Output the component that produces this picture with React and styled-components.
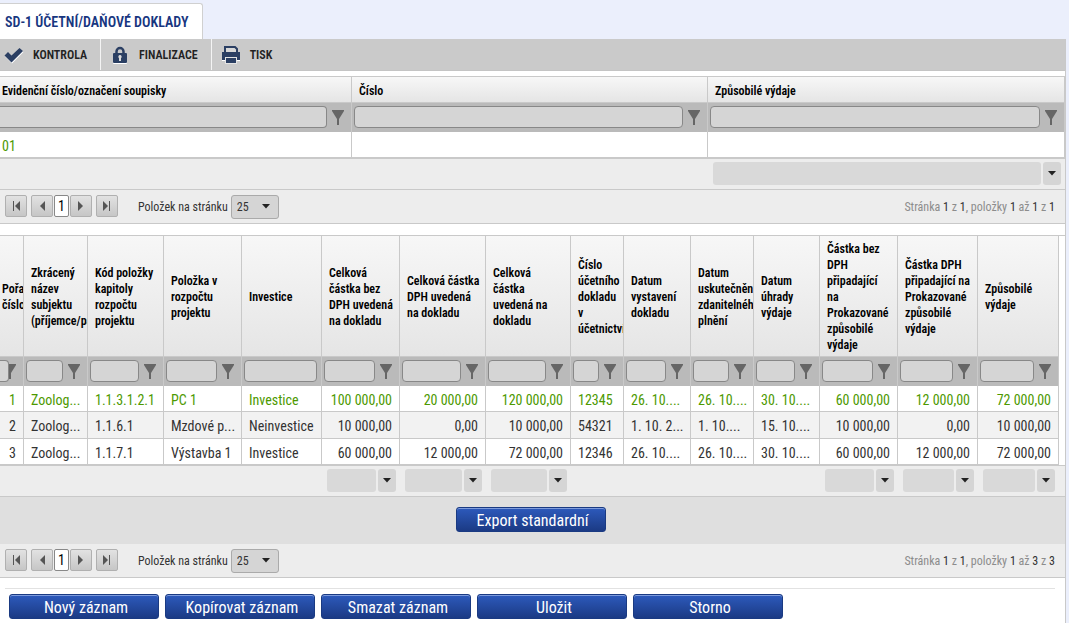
import styled, { createGlobalStyle } from "styled-components";

const GlobalStyle = createGlobalStyle`
  * {
    box-sizing: border-box;
  }

  body {
    margin: 0;
    background-color: #ebeffc;
    color: #333;
    font-family: "Roboto Condensed", "Liberation Sans Narrow", Roboto, sans-serif;
    font-size: 14px;
  }

  button, input, select {
    font-family: inherit;
  }
`;

const Page = styled.div`
  padding: 3px 3px 0 0;
`;

const Tab = styled.h1`
  display: inline-flex;
  align-items: center;
  height: 36px;
  margin: 0;
  padding: 0 14px 0 5px;
  border: 1px solid #d0d0d0;
  border-width: 1px 1px 0 0;
  border-top-right-radius: 3px;
  background-color: white;
  color: #17367f;
  font-size: 14px;
  font-weight: 600;
  vertical-align: top;
`;

const Panel = styled.main`
  min-height: calc(100vh - 39px);
  border-right: 1px solid #c9c9c9;
  background-color: white;
`;

const Toolbar = styled.div`
  display: flex;
  height: 32px;
  border-bottom: 1px solid #c4c4c4;
  background-color: #cacaca;
`;

const ToolButton = styled.button`
  display: flex;
  align-items: center;
  gap: 9px;
  padding: 0 13px 0 4px;
  border: 0;
  border-right: 1px solid #f4f4f4;
  background: none;
  color: #222;
  font-size: 12px;
  font-weight: 600;

  & + & {
    padding-left: 9px;
  }

  &:last-child {
    border-right: 0;
  }
`;

const Grid = styled.section`
  margin-top: ${({ $gap }) => $gap}px;
  border-top: 1px solid #c9c9c9;
`;

const Scroller = styled.div`
  padding-right: ${({ $inset }) => $inset}px;
`;

const Footer = styled(Scroller)`
  border: 1px solid #c9c9c9;
  border-width: 1px 0;
  background-color: #ededed;
`;

const Table = styled.table`
  width: 100%;
  table-layout: fixed;
  border-collapse: separate;
  border-spacing: 0;
`;

const HeadCell = styled.th`
  height: ${({ $height }) => $height}px;
  padding: 2px 0 0 ${({ $first }) => ($first ? 2 : 7)}px;
  overflow: hidden;
  border: 1px solid #c9c9c9;
  border-width: 0 1px 1px 0;
  background: linear-gradient(#f7f7f7, #e5e5e5);
  color: black;
  font-size: 12px;
  font-weight: 600;
  line-height: 16px;
  text-align: left;
  white-space: pre;
`;

const FilterCell = styled.td`
  height: 29px;
  padding: 0;
  border-right: 1px solid #c9c9c9;
  background-color: #bababa;
`;

const FilterBox = styled.div`
  display: flex;
  align-items: flex-start;
  gap: 5px;
  height: 29px;
  padding: 3px ${({ $plain }) => ($plain ? 4 : 7)}px 0 ${({ $first }) => ($first ? 0 : 2)}px;
`;

const FilterInput = styled.input`
  flex: 1;
  z-index: 1;
  min-width: 0;
  height: 22px;
  margin-right: ${({ $overlap }) => ($overlap ? -10 : 0)}px;
  padding: 0 4px;
  border: 1px solid #888;
  border-left-width: ${({ $first }) => ($first ? 0 : 1)}px;
  border-radius: ${({ $first }) => ($first ? "0 4px 4px 0" : "4px")};
  background-color: #d5d5d5;
`;

const FilterButton = styled.button`
  display: flex;
  padding: 4px 0 0;
  border: 0;
  background: none;
`;

const Cell = styled.td`
  height: ${({ $tall }) => ($tall ? 27 : 26)}px;
  padding: 2px 7px 0 ${({ $first }) => ($first ? 2 : 7)}px;
  overflow: hidden;
  border: 1px solid #c9c9c9;
  border-width: 0 1px 1px 0;
  line-height: 20px;
  text-align: ${({ $right }) => ($right ? "right" : "left")};
  white-space: nowrap;
`;

const Row = styled.tr`
  background-color: ${({ $odd }) => ($odd ? "#f2f2f2" : "white")};
  color: ${({ $selected }) => ($selected ? "#4d9900" : "#333")};
`;

const SumCell = styled.td`
  height: 30px;
  padding: 3px 4px 0 5px;
  vertical-align: top;
`;

const SumBox = styled.div`
  display: flex;
  gap: 2px;
  height: 23px;
`;

const SumValue = styled.output`
  flex: 1;
  border-radius: 3px;
  background-color: #d9d9d9;
`;

const SumButton = styled.button`
  display: flex;
  align-items: center;
  justify-content: center;
  width: 18px;
  padding: 0;
  border: 0;
  border-radius: 3px;
  background-color: #d5d5d5;
`;

const PagerBar = styled.nav`
  display: flex;
  align-items: flex-start;
  height: 34px;
  padding: 5px 10px 0 5px;
  border-bottom: 1px solid #c9c9c9;
  background-color: #ededed;
  font-size: 12px;
  line-height: 24px;
`;

const PagerButtons = styled.div`
  display: flex;
  gap: 1px;
  margin-right: 20px;
`;

const PagerButton = styled.button`
  display: flex;
  align-items: center;
  justify-content: center;
  width: 22px;
  height: 22px;
  padding: 0;
  border: 1px solid #b0b0b0;
  border-radius: 2px;
  background: linear-gradient(#e2e2e2, #c6c6c6);

  &:first-child {
    margin-right: 3px;
  }

  &:last-child {
    margin-left: 3px;
  }
`;

const PageNumber = styled.button`
  width: 15px;
  height: 22px;
  padding: 0;
  border: 1px solid #888;
  border-radius: 2px;
  background-color: white;
  color: black;
  font-size: 14px;
`;

const SizeLabel = styled.label`
  display: flex;
  gap: 3px;
`;

const SelectWrapper = styled.span`
  position: relative;
  display: flex;

  svg {
    position: absolute;
    top: 9px;
    right: 9px;
    pointer-events: none;
  }
`;

const SizeSelect = styled.select`
  appearance: none;
  width: 48px;
  height: 24px;
  padding: 0 0 0 5px;
  border: 1px solid #aaa;
  border-radius: 3px;
  background-color: #d5d5d5;
  color: #333;
  font-size: 12px;
`;

const PagerInfo = styled.span`
  margin-left: auto;
  color: #8c8c8c;

  b {
    color: #333;
    font-weight: 400;
  }
`;

const ExportBar = styled.div`
  display: flex;
  justify-content: center;
  padding: 10px 4px 12px 0;
  background-color: #dfdfdf;
`;

const PrimaryButton = styled.button`
  width: 150px;
  height: 25px;
  padding: 2px 0 0 4px;
  border: 1px solid #1a3a82;
  border-radius: 3px;
  background: linear-gradient(#2d5abc, #1b3a84);
  box-shadow: inset 0 1px 0 #7d9bdc;
  color: white;
  font-size: 16px;
  line-height: 21px;
`;

const Actions = styled.div`
  display: flex;
  gap: 6px;
  margin: 10px 10px 0 5px;
  padding: 5px 4px 4px;
  border-top: 1px solid #e2e2e2;
`;

const CheckIcon = () => (
  <svg width="20" height="18" viewBox="0 0 20 18" aria-hidden="true">
    <path d="M1 10.500 4.500 7 8 10.500 16 3l3.500 3L8 17.500z" fill="white" />
    <path d="M.5 9.500 4 6l3.500 3.500L15.500 2 19 5 7.500 16.500z" fill="#2b3f63" />
  </svg>
);

const LockIcon = () => (
  <svg width="20" height="18" viewBox="-1 0 20 18" aria-hidden="true">
    <path d="M5.500 9V5.500a3.500 3.500 0 0 1 7 0V9" fill="none" stroke="#2b3f63" strokeWidth="2.500" />
    <rect x="2" y="8" width="14" height="10" rx="1" fill="white" />
    <rect x="2" y="7" width="14" height="10" rx="1" fill="#2b3f63" />
    <path d="M9 9a1.800 1.800 0 0 1 1 3.200V15H8v-2.800A1.800 1.800 0 0 1 9 9z" fill="#dcdcdc" />
  </svg>
);

const PrintIcon = () => (
  <svg width="20" height="18" viewBox="0 0 20 18" aria-hidden="true">
    <path d="M4 7V1h10l2 2v4" fill="#d8d8d8" stroke="#2b3f63" strokeWidth="2" />
    <path d="M1 7h18v8H1z" fill="white" />
    <path d="M1 6h18v8H1z" fill="#2b3f63" />
    <path d="M4 11h12v7H4z" fill="#e4e4e4" />
    <path d="M5 12h10v5H5z" fill="#2b3f63" />
  </svg>
);

const FunnelIcon = () => (
  <svg width="12" height="15" viewBox="0 0 12 15" aria-hidden="true">
    <path d="M0 0h12v1L7 9v6H5V9L0 1z" fill="#666" />
  </svg>
);

const CaretIcon = () => (
  <svg width="8" height="5" viewBox="0 0 8 5" aria-hidden="true">
    <path d="M0 0h8L4 4.500z" fill="#222" />
  </svg>
);

const PagerIcon = ({ end, back }) => (
  <svg width="8" height="10" viewBox="0 0 8 10" aria-hidden="true">
    <g transform={back ? "translate(8 0) scale(-1 1)" : undefined} fill="#555">
      <path d={end ? "M0 0 5 5 0 10z" : "M1 0 6 5 1 10z"} />
      {end && <path d="M6 0h1v10H6z" />}
    </g>
  </svg>
);

const Columns = ({ columns }) => (
  <colgroup>
    {columns.map(({ title, width }) => (
      <col key={title} style={{ width: `${width}px` }} />
    ))}
  </colgroup>
);

const Pager = ({ total }) => (
  <PagerBar aria-label="Stránkování">
    <PagerButtons>
      <PagerButton type="button" aria-label="První stránka">
        <PagerIcon end back />
      </PagerButton>
      <PagerButton type="button" aria-label="Předchozí stránka">
        <PagerIcon back />
      </PagerButton>
      <PageNumber type="button">1</PageNumber>
      <PagerButton type="button" aria-label="Další stránka">
        <PagerIcon />
      </PagerButton>
      <PagerButton type="button" aria-label="Poslední stránka">
        <PagerIcon end />
      </PagerButton>
    </PagerButtons>
    <SizeLabel>
      Položek na stránku
      <SelectWrapper>
        <SizeSelect defaultValue="25">
          <option>25</option>
        </SizeSelect>
        <CaretIcon />
      </SelectWrapper>
    </SizeLabel>
    <PagerInfo>
      Stránka <b>1</b> z <b>1</b>, položky <b>1</b> až <b>{total}</b> z <b>{total}</b>
    </PagerInfo>
  </PagerBar>
);

const DataGrid = ({ columns, rows, headHeight, gap, inset, children }) => (
  <Grid $gap={gap}>
    <Scroller $inset={inset}>
      <Table>
        <Columns columns={columns} />
        <thead>
          <tr>
            {columns.map(({ title }, i) => (
              <HeadCell key={title} $height={headHeight} $first={i === 0}>
                {title}
              </HeadCell>
            ))}
          </tr>
          <tr>
            {columns.map(({ title, plain, overlap }, i) => (
              <FilterCell key={title}>
                <FilterBox $first={i === 0} $plain={plain}>
                  <FilterInput aria-label={title} $first={i === 0} $overlap={overlap} />
                  {!plain && (
                    <FilterButton type="button" aria-label="Filtr">
                      <FunnelIcon />
                    </FilterButton>
                  )}
                </FilterBox>
              </FilterCell>
            ))}
          </tr>
        </thead>
        <tbody>
          {rows.map((row, r) => (
            <Row key={r} $odd={r % 2 === 1} $selected={r === 0}>
              {row.map((value, i) => (
                <Cell
                  key={columns[i].title}
                  $first={i === 0}
                  $right={columns[i].right}
                  $tall={r % 2 === 1}
                >
                  {value}
                </Cell>
              ))}
            </Row>
          ))}
        </tbody>
      </Table>
    </Scroller>
    <Footer $inset={inset}>
      <Table>
        <Columns columns={columns} />
        <tbody>
          <tr>
            {columns.map(({ title, sum }) => (
              <SumCell key={title}>
                {sum && (
                  <SumBox>
                    <SumValue />
                    <SumButton type="button" aria-label="Souhrn">
                      <CaretIcon />
                    </SumButton>
                  </SumBox>
                )}
              </SumCell>
            ))}
          </tr>
        </tbody>
      </Table>
    </Footer>
    {children}
    <Pager total={rows.length} />
  </Grid>
);

const listColumns = [
  { title: "Evidenční číslo/označení soupisky", width: 352 },
  { title: "Číslo", width: 356 },
  { title: "Způsobilé výdaje", width: 357, sum: true },
];

const listRows = [["01", "", ""]];

const documentColumns = [
  { title: "Pořadové\nčíslo", width: 24, right: true, overlap: true },
  { title: "Zkrácený\nnázev\nsubjektu\n(příjemce/partner)", width: 64 },
  { title: "Kód položky\nkapitoly\nrozpočtu\nprojektu", width: 76 },
  { title: "Položka v\nrozpočtu\nprojektu", width: 78 },
  { title: "Investice", width: 80, plain: true },
  { title: "Celková\nčástka bez\nDPH uvedená\nna dokladu", width: 78, right: true, sum: true },
  { title: "Celková částka\nDPH uvedená\nna dokladu", width: 86, right: true, sum: true },
  { title: "Celková\nčástka\nuvedená na\ndokladu", width: 85, right: true, sum: true },
  { title: "Číslo\núčetního\ndokladu\nv\núčetnictví", width: 53 },
  { title: "Datum\nvystavení\ndokladu", width: 67 },
  { title: "Datum\nuskutečnění\nzdanitelného\nplnění", width: 63 },
  { title: "Datum\núhrady\nvýdaje", width: 66 },
  {
    title: "Částka bez\nDPH\npřipadající\nna\nProkazované\nzpůsobilé\nvýdaje",
    width: 78,
    right: true,
    sum: true,
  },
  {
    title: "Částka DPH\npřipadající na\nProkazované\nzpůsobilé\nvýdaje",
    width: 80,
    right: true,
    sum: true,
  },
  { title: "Způsobilé\nvýdaje", width: 81, right: true, sum: true },
];

const documentRows = [
  ["1", "Zoolog...", "1.1.3.1.2.1", "PC 1", "Investice", "100 000,00", "20 000,00", "120 000,00", "12345", "26. 10....", "26. 10....", "30. 10....", "60 000,00", "12 000,00", "72 000,00"],
  ["2", "Zoolog...", "1.1.6.1", "Mzdové p...", "Neinvestice", "10 000,00", "0,00", "10 000,00", "54321", "1. 10. 2...", "1. 10....", "15. 10....", "10 000,00", "0,00", "10 000,00"],
  ["3", "Zoolog...", "1.1.7.1", "Výstavba 1", "Investice", "60 000,00", "12 000,00", "72 000,00", "12346", "26. 10....", "26. 10....", "30. 10....", "60 000,00", "12 000,00", "72 000,00"],
];

const actions = ["Nový záznam", "Kopírovat záznam", "Smazat záznam", "Uložit", "Storno"];

const App = () => (
  <>
    <GlobalStyle />
    <Page>
      <Tab>SD-1 ÚČETNÍ/DAŇOVÉ DOKLADY</Tab>
      <Panel>
        <Toolbar>
          <ToolButton type="button">
            <CheckIcon />
            KONTROLA
          </ToolButton>
          <ToolButton type="button">
            <LockIcon />
            FINALIZACE
          </ToolButton>
          <ToolButton type="button">
            <PrintIcon />
            TISK
          </ToolButton>
        </Toolbar>
        <DataGrid columns={listColumns} rows={listRows} headHeight={26} gap={5} inset={0} />
        <DataGrid columns={documentColumns} rows={documentRows} headHeight={121} gap={11} inset={6}>
          <ExportBar>
            <PrimaryButton type="button">Export standardní</PrimaryButton>
          </ExportBar>
        </DataGrid>
        <Actions>
          {actions.map((label) => (
            <PrimaryButton key={label} type="button">
              {label}
            </PrimaryButton>
          ))}
        </Actions>
      </Panel>
    </Page>
  </>
);

export default App;
